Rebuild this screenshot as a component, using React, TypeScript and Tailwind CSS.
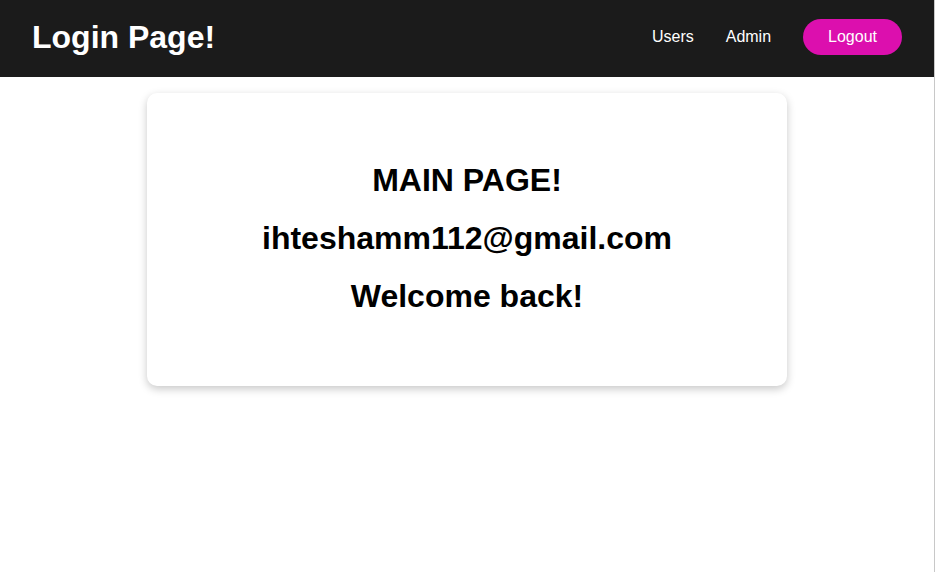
export default function App() {
  return (
    <div
      className="flex min-h-[572px] bg-white"
      style={{ fontFamily: '"Liberation Sans", Arial, sans-serif' }}
    >
      <div className="flex-1 min-w-0">
        <header className="flex items-center justify-between h-[77px] px-8 bg-[#1b1b1b]">
          <h1 className="text-[32px] font-bold text-white leading-[37px] mb-[2px]">Login Page!</h1>
          <nav className="flex items-center gap-8 text-base text-white mb-1">
            <a className="cursor-pointer">Users</a>
            <a className="cursor-pointer">Admin</a>
            <button className="h-9 px-[25px] rounded-full bg-[#dc0fae] text-white text-base">
              Logout
            </button>
          </nav>
        </header>

        <main className="flex justify-center pt-4">
          <div className="w-[640px] rounded-[10px] bg-white shadow-[0_3px_8px_rgba(0,0,0,0.22)] pt-[69px] pb-[71px] flex flex-col items-center gap-[21px] text-black">
            <h1 className="text-[32px] font-bold leading-[37px]">MAIN PAGE!</h1>
            <h1 className="text-[32px] font-bold leading-[37px]">ihteshamm112@gmail.com</h1>
            <h1 className="text-[32px] font-bold leading-[37px]">Welcome back!</h1>
          </div>
        </main>
      </div>
      <div className="w-[2px] border-l border-[#c8c8c8] bg-white" />
    </div>
  );
}
